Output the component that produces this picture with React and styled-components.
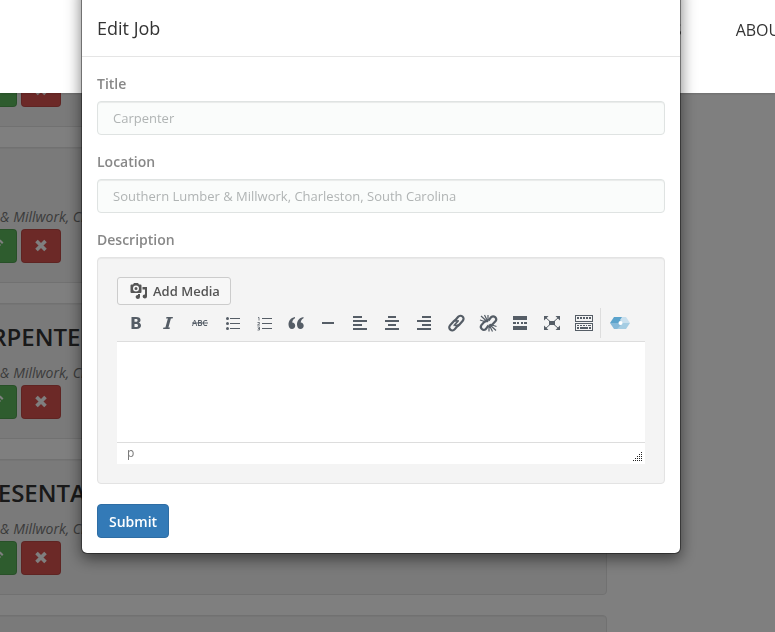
import React, { useState } from "react";
import styled, { createGlobalStyle, css } from "styled-components";

const JOBS = [
  { id: 1, title: "DRIVER" },
  { id: 2, title: "CASHIER" },
  { id: 3, title: "HEAD CARPENTER" },
  { id: 4, title: "CSR REPRESENTATIVE" },
  { id: 5, title: "SAWYER" },
];

const LOCATION = "Southern Lumber & Millwork, Charleston, South Carolina";

const CameraIcon = () => (
  <svg width="18" height="18" viewBox="0 0 18 18" fill="currentColor" aria-hidden="true">
    <path
      fillRule="evenodd"
      d="M1.500 2.500H3L4 1h4l1 1.500h1.500q1 0 1 1V10q0 1-1 1h-9q-1 0-1-1V3.500q0-1 1-1zM6 3.500a3 3 0 1 0 0 6 3 3 0 0 0 0-6zm0 1.500a1.500 1.500 0 1 1 0 3 1.500 1.500 0 0 1 0-3z"
    />
    <path d="M12.500 5H17v9.500a2.200 2 0 1 1-2-2V7.500h-2.500zM10 12v3a2.200 2 0 1 1-2-2V12z" />
  </svg>
);

const CrossIcon = () => (
  <svg width="14" height="14" viewBox="0 0 14 14" aria-hidden="true">
    <path d="M2.500 2l9 9M11.500 2l-9 9" stroke="currentColor" strokeWidth="3.600" />
  </svg>
);

const PencilIcon = () => (
  <svg width="14" height="14" viewBox="0 0 14 14" fill="currentColor" aria-hidden="true">
    <path d="M1 13l1-4 6-6 3 3-6 6zM9 2l1.500-1.500 3 3L12 5z" />
  </svg>
);

const ICONS = {
  Bold: (
    <path
      fillRule="evenodd"
      d="M5.500 4H10c3.200 0 4.500 1.200 4.500 3.100 0 1.400-.7 2.300-1.900 2.600 1.500.3 2.400 1.300 2.400 2.900 0 2.200-1.700 3.400-4.600 3.400H5.500zm3 4.700h1.300c1.300 0 1.800-.4 1.800-1.300S11 6.100 9.800 6.100H8.500zm0 5.200h1.600c1.300 0 1.900-.5 1.900-1.500s-.6-1.500-2-1.500H8.500z"
    />
  ),
  Italic: (
    <path d="M8.500 4h6.500l-.5 1.600h-1.600L10.400 14.400H12l-.5 1.600H5l.5-1.600h1.900L9.900 5.600H8z" />
  ),
  Strikethrough: (
    <>
      <text x="2" y="13" fontSize="8" fontWeight="600">
        ABC
      </text>
      <path d="M2 9.500h16v1H2z" />
    </>
  ),
  "Bulleted list": (
    <>
      <circle cx="5.500" cy="5.500" r="1.500" />
      <circle cx="5.500" cy="10.500" r="1.500" />
      <circle cx="5.500" cy="15.500" r="1.500" />
      <path d="M8 5h10v1H8zM8 10h10v1H8zM8 15h10v1H8z" />
    </>
  ),
  "Numbered list": (
    <>
      <path d="M8 5h10v1H8zM8 10h10v1H8zM8 15h10v1H8z" />
      <path
        d="M4 4.500h1v3M3.500 9.500h2v1l-2 1.500H6M3.500 14h2v3h-2M4 15.500h1.500"
        fill="none"
        stroke="currentColor"
        strokeWidth=".8"
      />
    </>
  ),
  Blockquote: (
    <path d="M9 4C4.500 4.800 2.500 8 2.500 11.500c0 2.700 1.300 4.500 3.500 4.500 1.900 0 3.200-1.300 3.200-3.200S8 9.700 6.200 9.600C6.400 7.800 7.300 6.300 9 5.300zM17.500 4c-4.500.8-6.500 4-6.500 7.500 0 2.700 1.300 4.500 3.500 4.500 1.900 0 3.200-1.300 3.200-3.200s-1.200-3.100-3-3.200c.2-1.800 1.100-3.300 2.800-4.300z" />
  ),
  "Horizontal line": <path d="M4 9h12v2H4z" />,
  "Align left": <path d="M3 3h9v2H3zM3 7h14v2H3zM3 11h9v2H3zM3 15h14v2H3z" />,
  "Align center": <path d="M6 3h8v2H6zM3 7h14v2H3zM6 11h8v2H6zM3 15h14v2H3z" />,
  "Align right": <path d="M8 3h9v2H8zM3 7h14v2H3zM8 11h9v2H8zM3 15h14v2H3z" />,
  "Insert link": (
    <g fill="none" stroke="currentColor" strokeWidth="2.200" strokeLinecap="round">
      <path d="M9 7.500l3.200-3.700a3 3 0 0 1 4.600 4L13.500 11.500a3 3 0 0 1-3.500 1" />
      <path d="M12 12.500l-3.400 3.900a3 3 0 0 1-4.600-4L7.300 8.700a3 3 0 0 1 3.400-1" />
      <path d="M8.200 12.300l4-4.400" strokeWidth="1.600" />
    </g>
  ),
  "Remove link": (
    <g fill="none" stroke="currentColor" strokeWidth="2.200">
      <path d="M10.500 7.500l2.700-3.400a3 3 0 0 1 4.400 4l-3 3.200q-1.200 1-2.600.5" />
      <path d="M10.500 12.500l-2.700 3.600a3 3 0 0 1-4.400-4l3-3.400q1.200-1 2.600-.5" />
      <path
        d="M3 3l6.500 6M6.500 2L10 9M10 2v6M2 7l6 2M18 17.500l-6.500-6M14.500 18.500l-3.500-7M11 18.500v-6M18.500 13.500l-6-2"
        strokeWidth="1.200"
      />
    </g>
  ),
  "Read more": (
    <path d="M3 3h14v4H3zM3 9h3v2H3zM7 9h2v2H7zM11 9h2v2h-2zM14 9h3v2h-3zM3 13h14v4H3z" />
  ),
  Fullscreen: (
    <>
      <path d="M7 8h6v4H7zM2 3h4.500L2 7.500zM18 3v4.500L13.500 3zM2 17v-4.500L6.500 17zM18 17h-4.500l4.500-4.500z" />
      <path d="M3 4l5 4.500M17 4l-5 4.500M3 16l5-4.500M17 16l-5-4.500" stroke="currentColor" />
    </>
  ),
  "Toolbar toggle": (
    <path
      fillRule="evenodd"
      d="M1 2h18v7H1zm1 1v5h16V3zM1 10h18v8H1zm1 1v6h16v-6zM3 4h2v2H3zM6 4h2v2H6zM9 4h2v2H9zM12 4h2v2h-2zM15 4h2v2h-2zM3 12h2v1H3zM6 12h2v1H6zM9 12h2v1H9zM12 12h1v1h-1zM14 12h3v1h-3zM3 14h2v2H3zM6 14h8v2H6zM15 14h2v2h-2z"
    />
  ),
};

const App = () => {
  const [title, setTitle] = useState("");
  const [location, setLocation] = useState("");

  return (
    <Page>
      <GlobalStyle />
      <JobList>
        {JOBS.map((job) => (
          <JobCard key={job.id}>
            <JobTitle>{job.title}</JobTitle>
            <JobLocation>{LOCATION}</JobLocation>
            <JobActions>
              <JobButton type="button" $wide $color="#337ab7">
                View
              </JobButton>
              <JobButton type="button" $color="#5cb85c" aria-label="Edit">
                <PencilIcon />
              </JobButton>
              <JobButton type="button" $color="#d9534f" aria-label="Delete">
                <CrossIcon />
              </JobButton>
            </JobActions>
          </JobCard>
        ))}
      </JobList>
      <Backdrop />
      <SiteHeader>
        <Nav>
          <NavLink href="#services">SERVICES</NavLink>
          <NavLink href="#about">ABOUT</NavLink>
        </Nav>
      </SiteHeader>

      <Overlay>
        <Dialog role="dialog" aria-labelledby="dialog-title">
          <DialogHeader>
            <DialogTitle id="dialog-title">Edit Job</DialogTitle>
          </DialogHeader>
          <Form onSubmit={(e) => e.preventDefault()}>
            <Field>
              <Label htmlFor="title">Title</Label>
              <Input
                id="title"
                placeholder="Carpenter"
                value={title}
                onChange={(e) => setTitle(e.target.value)}
              />
            </Field>
            <Field>
              <Label htmlFor="location">Location</Label>
              <Input
                id="location"
                placeholder={LOCATION}
                value={location}
                onChange={(e) => setLocation(e.target.value)}
              />
            </Field>
            <Field $last>
              <Label htmlFor="description">Description</Label>
              <Editor>
                <MediaButton type="button">
                  <CameraIcon />
                  Add Media
                </MediaButton>
                <Toolbar>
                  {Object.entries(ICONS).map(([name, icon]) => (
                    <ToolButton key={name} type="button" aria-label={name}>
                      <svg width="20" height="20" viewBox="0 0 20 20" fill="currentColor">
                        {icon}
                      </svg>
                    </ToolButton>
                  ))}
                  <Divider />
                  <ToolButton type="button" aria-label="Shortcodes">
                    <svg width="20" height="20" viewBox="0 0 20 20">
                      <path d="M0 10l4-6h9l-3 6z" fill="#5ba3cc" />
                      <path d="M0 10l4 6h9l-3-6z" fill="#85b9d9" />
                      <path d="M12 4h4l4 6h-8l-2-3z" fill="#c9e0ee" />
                      <path d="M20 10l-4 6H7l3-3 2-3z" fill="#a5cde3" />
                      <circle cx="10.500" cy="10" r="2" fill="#fff" />
                    </svg>
                  </ToolButton>
                </Toolbar>
                <TextArea id="description" />
                <StatusBar>
                  p
                  <svg width="10" height="10" viewBox="0 0 10 10" fill="#222" aria-hidden="true">
                    {[0, 1, 2, 3, 4].map((col) =>
                      Array.from({ length: col + 1 }, (_, row) => (
                        <rect
                          key={`${col}-${row}`}
                          x={col * 2}
                          y={8 - row * 2}
                          width="1"
                          height="1"
                        />
                      ))
                    )}
                  </svg>
                </StatusBar>
              </Editor>
            </Field>
            <SubmitButton type="submit">Submit</SubmitButton>
          </Form>
        </Dialog>
      </Overlay>
    </Page>
  );
};

const GlobalStyle = createGlobalStyle`
  * {
    box-sizing: border-box;
  }
  body {
    margin: 0;
    background: #fff;
    color: #333;
    font: 14px/20px "Open Sans", sans-serif;
  }
  button, input, textarea {
    font-family: inherit;
  }
`;

const Page = styled.div`
  height: 100vh;
  overflow: hidden;
`;

/* the list is scrolled a little under the fixed header */
const JobList = styled.main`
  display: flex;
  flex-direction: column;
  gap: 20px;
  margin: -9px 168px 0 -131px;
`;
const JobCard = styled.article`
  padding: 19px;
  border: 1px solid #e3e3e3;
  border-radius: 4px;
  background: #f5f5f5;
  box-shadow: inset 0 1px 1px rgba(0, 0, 0, 0.05);
`;
const JobTitle = styled.h3`
  margin: 0 0 12px;
  font-size: 24px;
  line-height: 28px;
  font-weight: 600;
  white-space: nowrap;
`;
const JobLocation = styled.p`
  margin: 0 0 2px;
  color: #777;
  font-style: italic;
  white-space: nowrap;
`;
const JobActions = styled.div`
  display: flex;
  gap: 4px;
`;

const buttonBase = css`
  display: flex;
  align-items: center;
  justify-content: center;
  height: 34px;
  border: 1px solid rgba(0, 0, 0, 0.12);
  border-radius: 4px;
  color: #fff;
  font-size: 14px;
`;
const JobButton = styled.button`
  ${buttonBase}
  width: ${(props) => (props.$wide ? "84px" : "40px")};
  background: ${(props) => props.$color};
`;

const Backdrop = styled.div`
  position: fixed;
  inset: 0;
  background: rgba(0, 0, 0, 0.5);
`;

const SiteHeader = styled.header`
  position: fixed;
  top: 0;
  left: 0;
  right: 0;
  height: 93px;
  background: #fff;
  box-shadow: 0 1px 2px rgba(0, 0, 0, 0.15);
  overflow: hidden;
`;
const Nav = styled.nav`
  display: flex;
  justify-content: flex-end;
  gap: 54px;
  margin-right: -14px;
  padding-top: 18px;
`;
const NavLink = styled.a`
  color: #333;
  font-size: 16px;
  line-height: 24px;
  text-decoration: none;
`;

const Overlay = styled.div`
  position: fixed;
  inset: 0;
  display: flex;
  justify-content: center;
  align-items: flex-start;
  padding-right: 13px;
  overflow: hidden;
`;
const Dialog = styled.section`
  width: 600px;
  margin-top: -20px;
  border: 1px solid rgba(0, 0, 0, 0.4);
  border-radius: 6px;
  background: #fff;
  background-clip: padding-box;
  box-shadow: 0 5px 15px rgba(0, 0, 0, 0.5);
`;
const DialogHeader = styled.div`
  padding: 34px 15px 15px;
  border-bottom: 1px solid #e5e5e5;
`;
const DialogTitle = styled.h4`
  margin: 0;
  font-size: 18px;
  line-height: 26px;
  font-weight: 400;
`;
const Form = styled.form`
  padding: 15px;
`;
const Field = styled.div`
  margin-bottom: ${(props) => (props.$last ? "20px" : "15px")};
`;
const Label = styled.label`
  display: block;
  margin-bottom: 5px;
  color: #888;
  line-height: 24px;
  font-weight: 600;
`;
const Input = styled.input`
  display: block;
  width: 100%;
  height: 34px;
  padding: 6px 15px;
  border: 1px solid #dfe3e2;
  border-radius: 4px;
  background: #fafcfb;
  box-shadow: inset 0 1px 1px rgba(0, 0, 0, 0.07);
  color: #555;
  font-size: 13px;
  &::placeholder {
    color: #b0b4b4;
  }
`;
const Editor = styled.div`
  padding: 19px;
  border: 1px solid #e3e3e3;
  border-radius: 4px;
  background: #f4f4f4;
  box-shadow: inset 0 1px 1px rgba(0, 0, 0, 0.05);
`;
const MediaButton = styled.button`
  display: flex;
  align-items: center;
  gap: 5px;
  height: 28px;
  padding: 0 10px 0 12px;
  border: 1px solid #ccc;
  border-radius: 3px;
  background: #f7f7f7;
  color: #555;
  font-size: 13px;
  font-weight: 600;
`;
const Toolbar = styled.div`
  display: flex;
  align-items: center;
  height: 37px;
  padding: 0 3px;
  border-bottom: 1px solid #ddd;
`;
const ToolButton = styled.button`
  display: flex;
  align-items: center;
  justify-content: center;
  width: 32px;
  height: 28px;
  padding: 0;
  border: 0;
  background: none;
  color: #555d66;
`;
const Divider = styled.span`
  width: 1px;
  height: 30px;
  margin-right: 3px;
  background: #ddd;
`;
const TextArea = styled.textarea`
  display: block;
  width: 100%;
  height: 100px;
  padding: 10px;
  border: 0;
  background: #fff;
  resize: none;
`;
const StatusBar = styled.div`
  display: flex;
  align-items: flex-end;
  justify-content: space-between;
  height: 22px;
  padding: 0 2px 2px 10px;
  border-top: 1px solid #ddd;
  background: #fff;
  color: #777;
  font-size: 12px;
  line-height: 18px;
`;
const SubmitButton = styled.button`
  ${buttonBase}
  padding: 0 11px;
  border-color: #2e6da4;
  background: #337ab7;
  font-weight: 600;
`;

export default App;
